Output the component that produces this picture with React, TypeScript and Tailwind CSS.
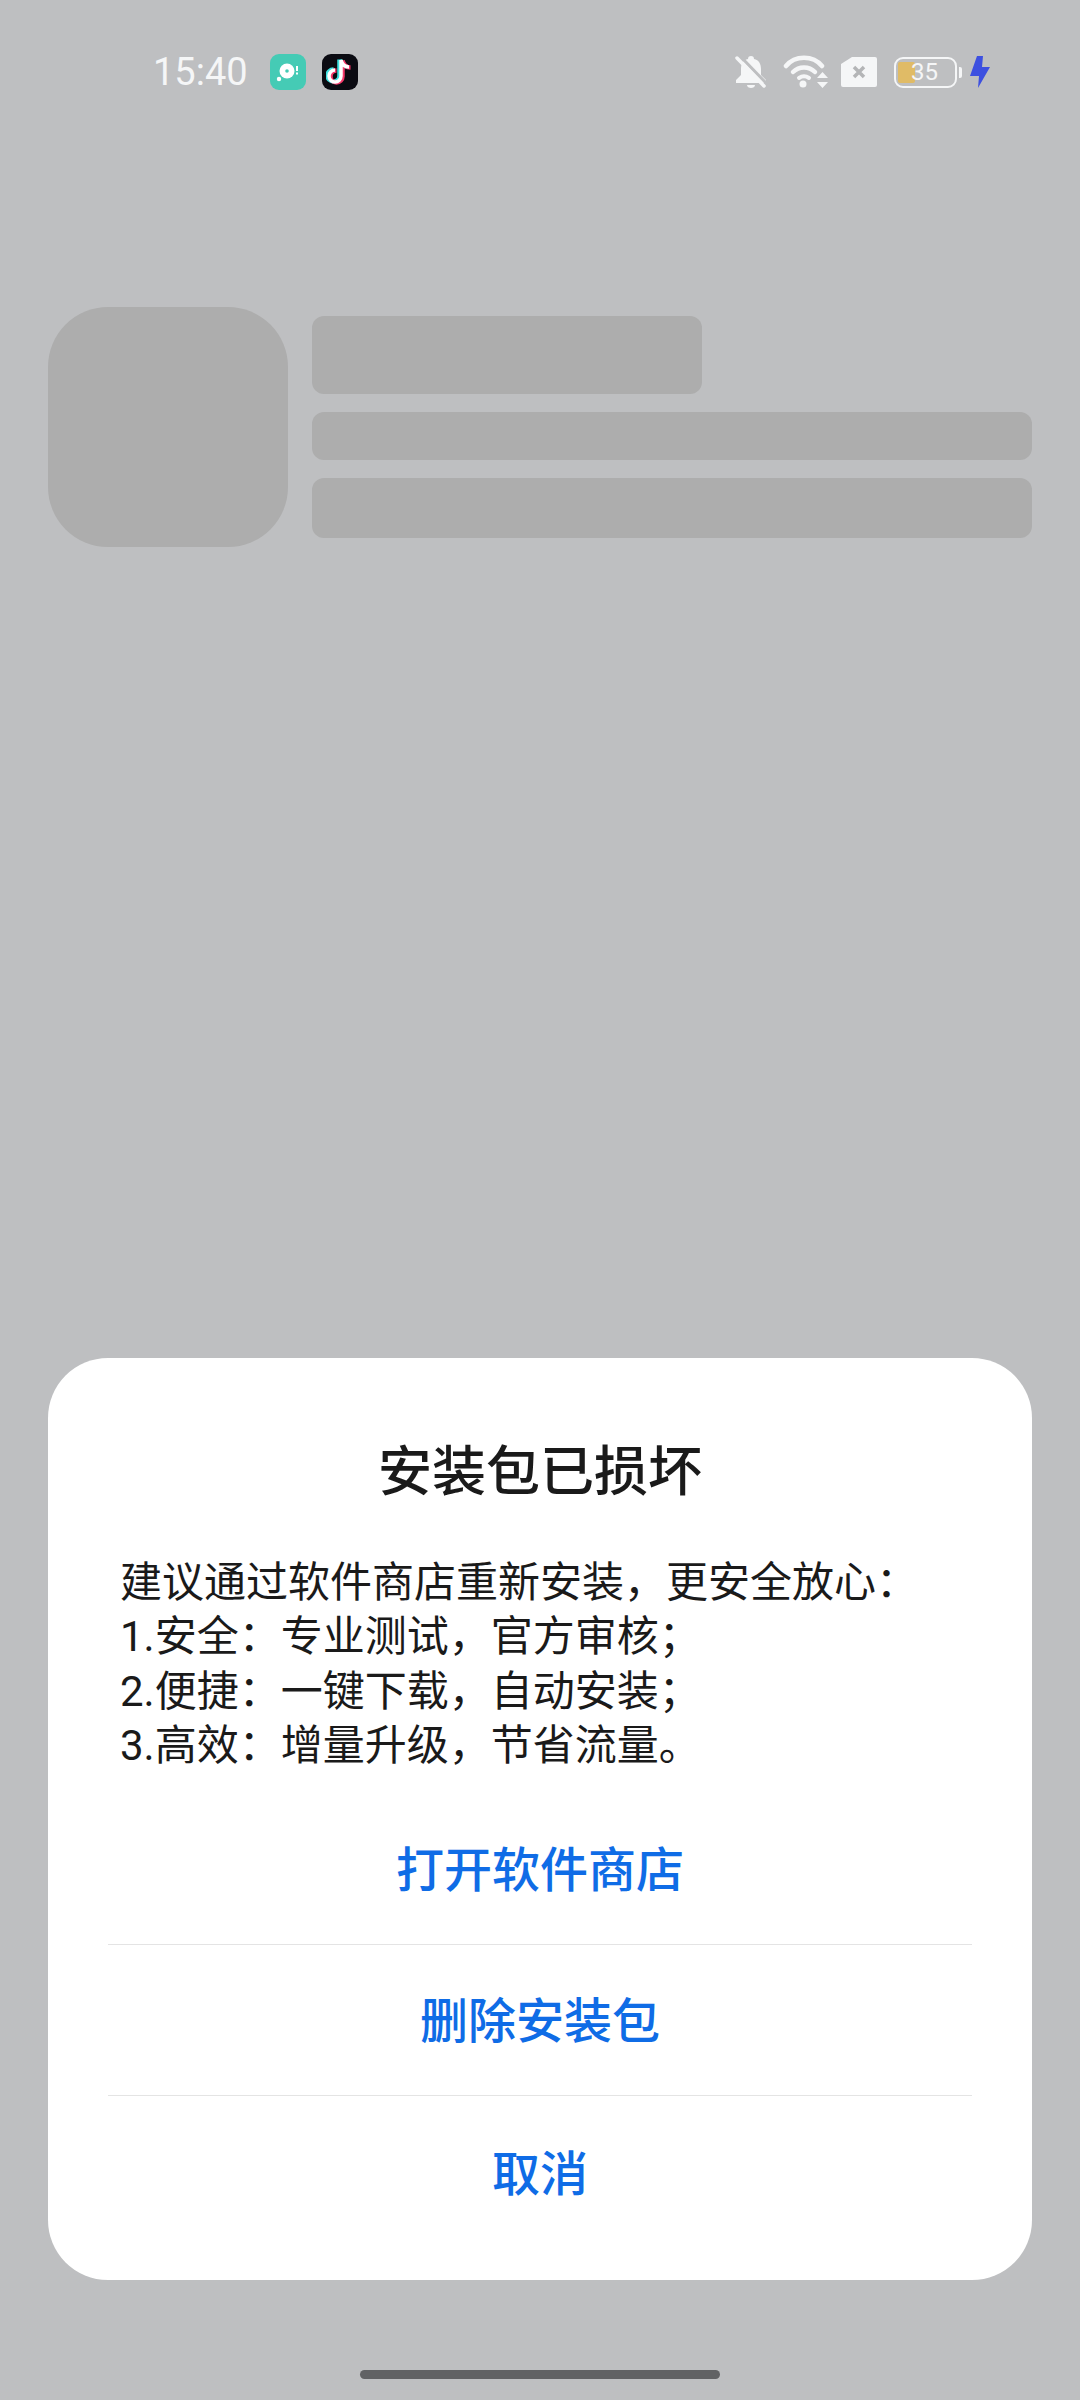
const cjk = '[font-family:Roboto,"Noto_Sans_CJK_SC",sans-serif]';

function MuteIcon() {
  return (
    <svg width="32" height="34" viewBox="0 0 32 34" fill="none">
      <path d="M16 1c2 0 3 1 3 3 5 1 7 5 7 10v6l5 5v3H1v-3l5-5v-6c0-5 2-9 7-10 0-2 1-3 3-3z" fill="#f5f6f7" />
      <path d="M12 30h8c0 2-2 3-4 3s-4-1-4-3z" fill="#f5f6f7" />
      <path d="M5 1l27 28" stroke="#bebfc1" strokeWidth="3" />
      <path d="M2 3l27 28" stroke="#f5f6f7" strokeWidth="3.5" strokeLinecap="round" />
    </svg>
  );
}

function WifiIcon() {
  return (
    <svg width="48" height="34" viewBox="0 0 48 34" fill="none" stroke="#f5f6f7" strokeLinecap="round">
      <path d="M3 11C12 0 30 0 39 11" strokeWidth="4.5" />
      <path d="M10 17c6-6 16-6 22 0" strokeWidth="4.5" />
      <path d="M16 23c3-2 7-2 10 0" strokeWidth="4" />
      <circle cx="20" cy="29" r="3.5" fill="#f5f6f7" stroke="none" />
      <path d="M34 23l5.500-6 5.500 6zM34 27l5.500 6 5.500-6z" fill="#f5f6f7" stroke="none" />
    </svg>
  );
}

function SimIcon() {
  return (
    <svg width="36" height="30" viewBox="0 0 36 30">
      <path d="M11 0h23a2 2 0 0 1 2 2v26a2 2 0 0 1-2 2H2a2 2 0 0 1-2-2V7z" fill="#f5f6f7" />
      <path d="M13 10l10 10M23 10L13 20" stroke="#b4b5b7" strokeWidth="3.500" />
    </svg>
  );
}

function BoltIcon() {
  return (
    <svg width="20" height="32" viewBox="0 0 20 32">
      <path d="M7 0h6l-1 11h8L8 32l1-12H0z" fill="#3d50e0" />
    </svg>
  );
}

function TikTokIcon() {
  const note = 'M15 3v16a6 6 0 1 1-6-6M15 3c1 4 4 7 8 7';
  return (
    <div className="flex h-9 w-9 items-center justify-center rounded-[9px] bg-[#0b0b12]">
      <svg width="28" height="30" viewBox="0 0 28 30" fill="none" strokeWidth="4.5">
        <path d={note} stroke="#3fe0e0" transform="translate(-1.500 -0.500)" />
        <path d={note} stroke="#f5386a" transform="translate(1.500 0.500)" />
        <path d={note} stroke="#ffffff" strokeWidth="3.500" />
      </svg>
    </div>
  );
}

function AppGreenIcon() {
  return (
    <div className="h-9 w-9 rounded-[9px] bg-[#45cbb5]">
      <svg width="36" height="36" viewBox="0 0 36 36">
        <circle cx="17" cy="17" r="7.500" fill="#fff" />
        <circle cx="17" cy="17" r="1.800" fill="#45cbb5" />
        <circle cx="9" cy="25" r="2.200" fill="#fff" />
        <rect x="26" y="12" width="2" height="5" fill="#fff" />
        <rect x="26" y="18.500" width="2" height="2" fill="#fff" />
      </svg>
    </div>
  );
}

function Battery() {
  return (
    <div className="flex items-center gap-[2px]">
      <div className="relative h-[31px] w-[63px] overflow-hidden rounded-[9px] border-2 border-[#f5f6f7]">
        <div className="absolute inset-y-[3px] left-[2px] w-[17px] rounded-[2px] bg-[#e0bb66]" />
        <span className="absolute inset-0 flex items-center justify-center pr-[2px] font-['Roboto'] text-[24px] leading-none text-[#f5f6f7]">
          35
        </span>
      </div>
      <div className="h-[11px] w-[3px] rounded-r-[2px] bg-[#f5f6f7]" />
    </div>
  );
}

function ActionButton({ label, className }: { label: string; className: string }) {
  return (
    <button className={`flex w-full items-center justify-center pt-[4px] text-[48px] leading-none font-medium text-[#0f6ce6] ${className}`}>
      {label}
    </button>
  );
}

export default function App() {
  return (
    <div className={`flex h-[2400px] w-[1080px] flex-col bg-[#bebfc1] ${cjk}`}>
      {/* status bar */}
      <div className="flex h-[36px] mt-[54px] items-center pl-[153px] pr-[90px]">
        <span className="w-[117px] font-['Roboto'] text-[38px] leading-none text-[#f5f6f7]">15:40</span>
        <div className="flex gap-4">
          <AppGreenIcon />
          <TikTokIcon />
        </div>
        <div className="ml-auto flex items-center">
          <MuteIcon />
          <div className="ml-[16px]"><WifiIcon /></div>
          <div className="ml-[10px]"><SimIcon /></div>
          <div className="ml-[17px]"><Battery /></div>
          <div className="ml-[8px]"><BoltIcon /></div>
        </div>
      </div>

      {/* blurred app info placeholder */}
      <div className="mt-[217px] flex gap-6 px-12">
        <div className="h-[240px] w-[240px] shrink-0 rounded-[60px] bg-[#adadad]" />
        <div className="flex flex-1 flex-col pt-[9px]">
          <div className="h-[78px] w-[390px] rounded-[12px] bg-[#adadad]" />
          <div className="mt-[18px] h-[48px] rounded-[12px] bg-[#adadad]" />
          <div className="mt-[18px] h-[60px] rounded-[12px] bg-[#adadad]" />
        </div>
      </div>

      {/* dialog */}
      <div className="mx-12 mt-[811px] flex h-[922px] flex-col rounded-[60px] bg-white">
        <h1 className="mt-[85px] text-center text-[54px] leading-[60px] font-medium text-[#1a1a1a]">
          安装包已损坏
        </h1>
        <div className="mt-[53px] px-[72px] text-[42px] leading-[54.4px] text-[#1a1a1a]">
          <p>建议通过软件商店重新安装，更安全放心：</p>
          <p>1.安全：专业测试，官方审核；</p>
          <p>2.便捷：一键下载，自动安装；</p>
          <p>3.高效：增量升级，节省流量。</p>
        </div>
        <div className="mx-[60px] mt-[21px] flex flex-col">
          <ActionButton label="打开软件商店" className="h-[150px] border-b border-[#e4e4e4]" />
          <ActionButton label="删除安装包" className="h-[151px] border-b border-[#e4e4e4]" />
          <ActionButton label="取消" className="h-[154px]" />
        </div>
      </div>

      {/* gesture bar */}
      <div className="mx-auto mt-[90px] h-[9px] w-[360px] rounded-full bg-[#616264]" />
    </div>
  );
}
